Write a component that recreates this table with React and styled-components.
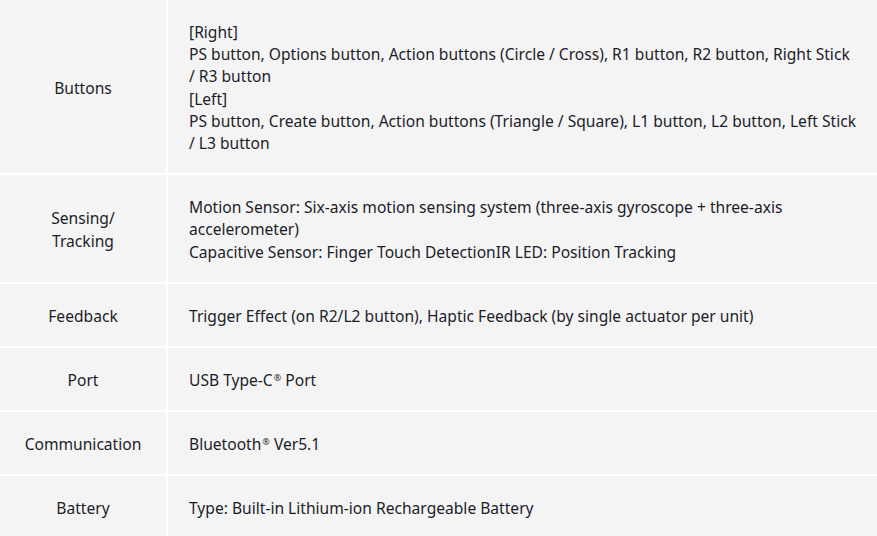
import React from 'react'
import styled, { createGlobalStyle } from 'styled-components'

const GlobalStyle = createGlobalStyle`
  html, body {
    margin: 0;
    padding: 0;
    background: #ffffff;
  }
  body {
    font-family: "Noto Sans", "Open Sans", sans-serif;
    color: #1c1c2a;
  }
`

const SpecTable = styled.div`
  display: grid;
  grid-template-columns: 166px 1fr;
  column-gap: 2px;
  row-gap: 2px;
  background: #ffffff;
  width: 877px;
`

const LabelCell = styled.div`
  background: #f4f4f4;
  display: flex;
  align-items: center;
  justify-content: center;
  text-align: center;
  padding: 21px 10px 19px;
  font-size: 15.6px;
  line-height: 22.2px;
`

const ValueCell = styled.div`
  background: #f4f4f4;
  display: flex;
  flex-direction: column;
  justify-content: center;
  padding: 21px 20px 19px 21px;
  font-size: 15.6px;
  line-height: 22.2px;
`

const Line = styled.div``

const Reg = styled.sup`
  font-size: 9px;
  line-height: 0;
  vertical-align: 5px;
  margin-left: 1px;
`

const specs = [
  {
    label: 'Buttons',
    lines: [
      '[Right]',
      'PS button, Options button, Action buttons (Circle / Cross), R1 button, R2 button, Right Stick / R3 button',
      '[Left]',
      'PS button, Create button, Action buttons (Triangle / Square), L1 button, L2 button, Left Stick / L3 button',
    ],
  },
  {
    label: <>Sensing/<br />Tracking</>,
    lines: [
      'Motion Sensor: Six-axis motion sensing system (three-axis gyroscope + three-axis accelerometer)',
      'Capacitive Sensor: Finger Touch DetectionIR LED: Position Tracking',
    ],
  },
  {
    label: 'Feedback',
    lines: ['Trigger Effect (on R2/L2 button), Haptic Feedback (by single actuator per unit)'],
  },
  {
    label: 'Port',
    lines: [<>USB Type-C<Reg>®</Reg> Port</>],
  },
  {
    label: 'Communication',
    lines: [<>Bluetooth<Reg>®</Reg> Ver5.1</>],
  },
  {
    label: 'Battery',
    lines: ['Type: Built-in Lithium-ion Rechargeable Battery'],
  },
]

function App() {
  return (
    <>
      <GlobalStyle />
      <SpecTable>
        {specs.map((row, i) => (
          <React.Fragment key={i}>
            <LabelCell>{row.label}</LabelCell>
            <ValueCell>
              {row.lines.map((l, j) => (
                <Line key={j}>{l}</Line>
              ))}
            </ValueCell>
          </React.Fragment>
        ))}
      </SpecTable>
    </>
  )
}

export default App
